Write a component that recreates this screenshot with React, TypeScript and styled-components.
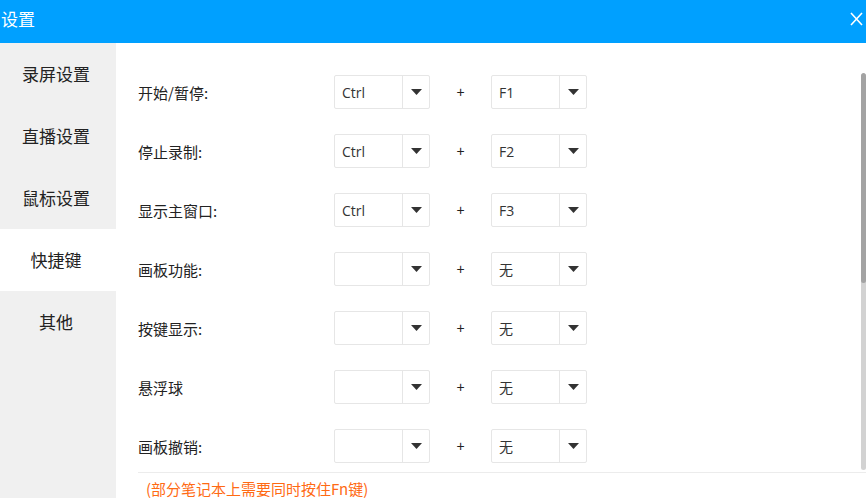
import React from "react";
import styled, { createGlobalStyle } from "styled-components";

const Global = createGlobalStyle`
  html, body { margin: 0; padding: 0; background: #fff; }
  body { font-family: "Noto Sans", "Noto Sans CJK SC", sans-serif; color: #222; }
  * { box-sizing: border-box; }
`;

const Window = styled.div`
  width: 866px;
  height: 498px;
  display: flex;
  flex-direction: column;
  overflow: hidden;
  background: #fff;
`;

const Header = styled.div`
  height: 43px;
  flex: none;
  background: #00a0ff;
  display: flex;
  align-items: center;
  justify-content: space-between;
  padding: 0 2px 0 1px;
  color: #fff;
`;

const Title = styled.div`
  font-size: 17px;
  line-height: 20px;
  font-family: "Noto Sans CJK SC", sans-serif;
  margin-top: -5px;
`;

const CloseBtn = styled.div`
  width: 16px;
  height: 16px;
  display: flex;
  align-items: center;
  justify-content: center;
  margin-top: -6px;
`;

const Body = styled.div`
  flex: 1;
  display: flex;
  min-height: 0;
`;

const Sidebar = styled.div`
  width: 116px;
  flex: none;
  background: #f0f0f0;
  display: flex;
  flex-direction: column;
`;

const NavItem = styled.div<{ $active?: boolean }>`
  height: 62px;
  display: flex;
  align-items: center;
  justify-content: center;
  font-size: 17px;
  font-family: "Noto Sans CJK SC", sans-serif;
  color: #222;
  background: ${(p) => (p.$active ? "#fff" : "transparent")};
  padding-right: 4px;
  padding-bottom: 1px;
`;

const Content = styled.div`
  flex: 1;
  display: flex;
  flex-direction: column;
  padding-left: 22px;
  min-width: 0;
`;

const ScrollRegion = styled.div`
  height: 429px;
  flex: none;
  display: flex;
`;

const Rows = styled.div`
  flex: 1;
  display: flex;
  flex-direction: column;
  gap: 25px;
  padding-top: 32px;
`;

const Row = styled.div`
  display: flex;
  align-items: center;
  height: 34px;
`;

const Label = styled.div`
  width: 196px;
  font-size: 15px;
  font-family: "Noto Sans CJK SC", sans-serif;
  color: #222;
`;

const Plus = styled.div`
  width: 61px;
  text-align: center;
  font-size: 14px;
  color: #222;
  font-family: "Liberation Sans", sans-serif;
`;

const Select = styled.div`
  width: 96px;
  height: 34px;
  border: 1px solid #e6e6e6;
  border-radius: 2px;
  display: flex;
  background: #fff;
`;

const SelectValue = styled.div`
  flex: 1;
  display: flex;
  align-items: center;
  padding-left: 7px;
  font-size: 14px;
  font-family: "Open Sans", "Noto Sans CJK SC", sans-serif;
  color: #333;
  border-right: 1px solid #e6e6e6;
`;

const SelectArrow = styled.div`
  width: 26px;
  display: flex;
  align-items: center;
  justify-content: center;
`;

const Scrollbar = styled.div`
  width: 5px;
  margin-top: 30px;
  margin-bottom: 2px;
  background: #d2d2d2;
  border-radius: 3px;
  display: flex;
  flex-direction: column;
  overflow: hidden;
`;

const Thumb = styled.div`
  height: 210px;
  background: #a3a3a3;
  border-radius: 3px;
`;

const Divider = styled.div`
  height: 1px;
  background: #ececec;
  flex: none;
`;

const Note = styled.div`
  padding-left: 8px;
  padding-top: 5px;
  font-size: 15px;
  line-height: 22px;
  font-family: "Noto Sans CJK SC", sans-serif;
  color: #ff6a13;
`;

const Arrow = () => (
  <svg width="11" height="6" viewBox="0 0 11 6">
    <polygon points="0,0 11,0 5.5,6" fill="#333" />
  </svg>
);

const Dropdown = ({ value }: { value: string }) => (
  <Select>
    <SelectValue>{value}</SelectValue>
    <SelectArrow>
      <Arrow />
    </SelectArrow>
  </Select>
);

const nav = ["录屏设置", "直播设置", "鼠标设置", "快捷键", "其他"];

const rows: [string, string, string][] = [
  ["开始/暂停:", "Ctrl", "F1"],
  ["停止录制:", "Ctrl", "F2"],
  ["显示主窗口:", "Ctrl", "F3"],
  ["画板功能:", "", "无"],
  ["按键显示:", "", "无"],
  ["悬浮球", "", "无"],
  ["画板撤销:", "", "无"],
];

export default function App() {
  return (
    <>
      <Global />
      <Window>
        <Header>
          <Title>设置</Title>
          <CloseBtn>
            <svg width="13" height="14" viewBox="0 0 13 14">
              <path d="M1 1 L12 13 M12 1 L1 13" stroke="#fff" strokeWidth="1.6" />
            </svg>
          </CloseBtn>
        </Header>
        <Body>
          <Sidebar>
            {nav.map((n, i) => (
              <NavItem key={n} $active={i === 3}>
                {n}
              </NavItem>
            ))}
          </Sidebar>
          <Content>
            <ScrollRegion>
              <Rows>
                {rows.map(([label, a, b]) => (
                  <Row key={label}>
                    <Label>{label}</Label>
                    <Dropdown value={a} />
                    <Plus>+</Plus>
                    <Dropdown value={b} />
                  </Row>
                ))}
              </Rows>
              <Scrollbar>
                <Thumb />
              </Scrollbar>
            </ScrollRegion>
            <Divider />
            <Note>(部分笔记本上需要同时按住Fn键)</Note>
          </Content>
        </Body>
      </Window>
    </>
  );
}
